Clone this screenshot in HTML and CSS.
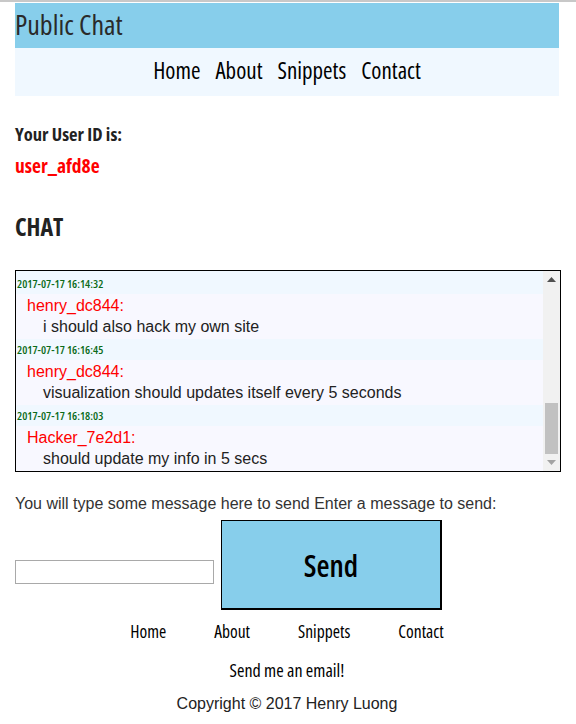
FILE: index.html
```html
<!DOCTYPE html>
<html lang="en">
<head>
<meta charset="utf-8">
<title>Public Chat</title>
<link rel="stylesheet" href="styles.css">
</head>
<body>
<div class="page">
  <header class="banner">Public Chat</header>
  <nav class="topnav">
    <a href="#">Home</a>
    <a href="#">About</a>
    <a href="#">Snippets</a>
    <a href="#">Contact</a>
  </nav>

  <h3 class="uid-label">Your User ID is:</h3>
  <div class="uid">user_afd8e</div>

  <h2 class="chat-title">CHAT</h2>

  <div class="chatbox">
    <div class="viewport">
      <div class="msg"><div class="ts">2017-07-17 16:14:32</div><div class="who">henry_dc844:</div><div class="text">i should also hack my own site</div></div>
      <div class="msg"><div class="ts">2017-07-17 16:16:45</div><div class="who">henry_dc844:</div><div class="text">visualization should updates itself every 5 seconds</div></div>
      <div class="msg"><div class="ts">2017-07-17 16:18:03</div><div class="who">Hacker_7e2d1:</div><div class="text">should update my info in 5 secs</div></div>
    </div>
    <div class="scrollbar" aria-hidden="true">
      <div class="sb-btn">
        <svg width="9" height="5" viewBox="0 0 9 5"><polygon points="0,5 4.5,0 9,5" fill="#505050"/></svg>
      </div>
      <div class="sb-track"><div class="sb-thumb"></div></div>
      <div class="sb-btn">
        <svg width="9" height="5" viewBox="0 0 9 5"><polygon points="0,0 9,0 4.5,5" fill="#a3a3a3"/></svg>
      </div>
    </div>
  </div>

  <p class="prompt">You will type some message here to send Enter a message to send:</p>

  <form class="send-row" onsubmit="return false">
    <input class="msg-input" type="text" aria-label="Message">
    <button class="send-btn" type="submit">Send</button>
  </form>

  <footer class="foot">
    <nav class="footnav">
      <a href="#">Home</a>
      <a href="#">About</a>
      <a href="#">Snippets</a>
      <a href="#">Contact</a>
    </nav>
    <div class="email"><a href="#">Send me an email!</a></div>
    <div class="copy">Copyright © 2017 Henry Luong</div>
  </footer>
</div>
</body>
</html>
```

FILE: styles.css
```css
html, body {
  margin: 0;
  padding: 0;
}
body {
  border-top: 2px solid #c8c8c8;
  font-family: "Liberation Sans", Arial, sans-serif;
  font-size: 16px;
  color: #222;
  background: #fff;
}
.page {
  width: 544px;
  margin-left: 15px;
  padding-top: 1px;
}
.banner,
.topnav,
.uid-label,
.uid,
.chat-title,
.ts,
.send-btn,
.footnav,
.email {
  font-family: "Open Sans", sans-serif;
  font-stretch: 75%;
}
.banner {
  box-sizing: border-box;
  height: 45px;
  padding-top: 4px;
  background: #87ceeb;
  font-size: 28px;
  font-weight: 500;
  line-height: 34px;
  color: #2a2a2a;
}
.topnav {
  box-sizing: border-box;
  height: 48px;
  padding-top: 8px;
  background: #f0f8ff;
  display: flex;
  justify-content: center;
  gap: 15px;
  font-size: 23px;
  font-weight: 500;
  line-height: 28px;
}
.topnav a, .footnav a, .email a {
  color: #000;
  text-decoration: none;
}
.uid-label {
  margin: 26px 0 0;
  font-size: 18.5px;
  font-weight: 700;
  line-height: 24px;
  color: #222;
}
.uid {
  margin-top: 8px;
  font-size: 19.5px;
  font-weight: 700;
  line-height: 24px;
  color: #ff0000;
}
.chat-title {
  margin: 34px 0 0;
  font-size: 24px;
  font-weight: 700;
  line-height: 30px;
  color: #222;
}
.chatbox {
  margin-top: 28px;
  width: 544px;
  height: 200px;
  border: 1px solid #000;
  display: flex;
  background: #f8f8ff;
}
.viewport {
  flex: 1;
  display: flex;
  flex-direction: column;
}
.ts {
  height: 21px;
  line-height: 21px;
  padding-left: 1px;
  background: #f0f8ff;
  font-size: 11.5px;
  font-weight: 600;
  color: #0b6b1a;
}
.msg:first-child .ts {
  height: 23px;
  line-height: 25px;
}
.who {
  height: 22px;
  line-height: 24px;
  padding-left: 11px;
  color: #ff0000;
}
.text {
  height: 23px;
  line-height: 22px;
  padding-left: 27px;
  color: #222;
}
.scrollbar {
  width: 17px;
  background: #f1f1f1;
  display: flex;
  flex-direction: column;
}
.sb-btn {
  height: 17px;
  display: flex;
  align-items: center;
  justify-content: center;
}
.sb-track {
  flex: 1;
  display: flex;
  flex-direction: column;
  justify-content: flex-end;
  padding: 0 2px 0 2px;
}
.sb-thumb {
  height: 51px;
  background: #c1c1c1;
}
.prompt {
  margin: 23px 0 0;
  line-height: normal;
  color: #333;
}
.send-row {
  margin: 7px 0 0;
  display: flex;
  align-items: flex-start;
  gap: 7px;
}
.msg-input {
  box-sizing: border-box;
  width: 199px;
  height: 24px;
  margin: 40px 0 0;
  border: 1px solid #a9a9a9;
  padding: 1px 3px;
  background: #fff;
}
.send-btn {
  box-sizing: border-box;
  width: 221px;
  height: 90px;
  margin: 0;
  padding: 2px 0 0;
  background: #87ceeb;
  border: 1px solid #000;
  border-right-width: 2px;
  border-bottom-width: 2px;
  font-size: 30px;
  font-weight: 600;
  line-height: 40px;
  color: #000;
}
.foot {
  text-align: center;
}
.footnav {
  margin-top: 10px;
  display: flex;
  justify-content: center;
  gap: 48px;
  font-size: 17.5px;
  font-weight: 500;
  line-height: 22px;
}
.email {
  margin-top: 16px;
  font-size: 18px;
  font-weight: 500;
  line-height: 24px;
}
.copy {
  margin-top: 13px;
  line-height: normal;
  color: #222;
}
```
